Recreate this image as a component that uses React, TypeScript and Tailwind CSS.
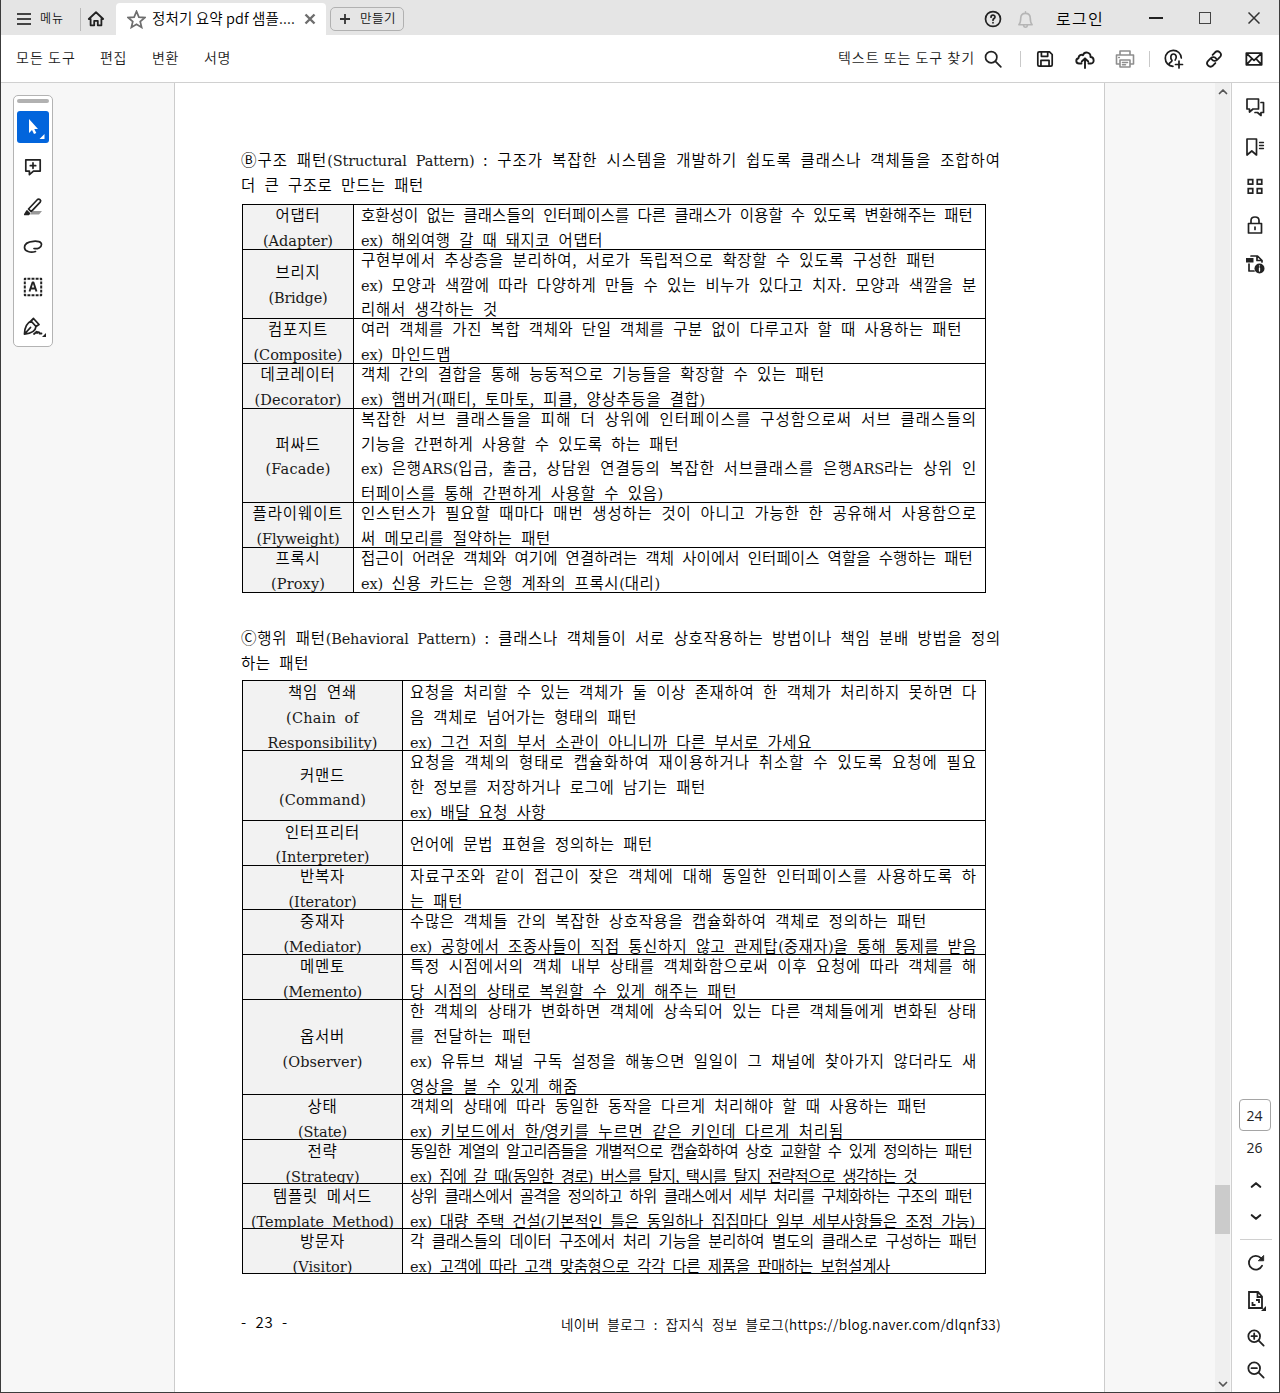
import { useLayoutEffect, useRef, useState } from 'react';
import type { ReactNode } from 'react';

function Fit({ text, w, serif = false, className = '' }: { text: string; w: number; serif?: boolean; className?: string }) {
  const ref = useRef<HTMLSpanElement>(null);
  const [spacing, setSpacing] = useState(0);
  const mixed = serif && /[가-힣]/.test(text);
  useLayoutEffect(() => {
    const count = mixed ? text.replace(/[A-Za-z()/]/g, '').length : text.length;
    if (ref.current) setSpacing((w - ref.current.getBoundingClientRect().width) / count);
  }, []);
  return (
    <span ref={ref} className={`inline-block whitespace-pre ${className}`} style={{ letterSpacing: spacing }}>
      {serif
        ? text.split(/([A-Za-z()/]+)/).map((part, i) =>
            i % 2 ? (
              <span key={i} className={`font-['DejaVu_Serif',serif] text-[14.5px] font-normal leading-none text-[#1a1a1a] ${mixed ? 'tracking-[-0.15px]' : ''}`}>{part}</span>
            ) : (
              part
            ),
          )
        : text}
    </span>
  );
}

type Line = [string, number];
type Row = { h: string; label: Line[]; body: Line[] };

const structural: Row[] = [
  { h: 'h-[45px]', label: [['어댑터', 45], ['(Adapter)', 70]], body: [['호환성이 없는 클래스들의 인터페이스를 다른 클래스가 이용할 수 있도록 변환해주는 패턴', 612], ['ex) 해외여행 갈 때 돼지코 어댑터', 242]] },
  { h: 'h-[69px]', label: [['브리지', 45], ['(Bridge)', 59]], body: [['구현부에서 추상층을 분리하여, 서로가 독립적으로 확장할 수 있도록 구성한 패턴', 575], ['ex) 모양과 색깔에 따라 다양하게 만들 수 있는 비누가 있다고 치자. 모양과 색깔을 분', 616], ['리해서 생각하는 것', 137]] },
  { h: 'h-[45px]', label: [['컴포지트', 60], ['(Composite)', 89]], body: [['여러 객체를 가진 복합 객체와 단일 객체를 구분 없이 다루고자 할 때 사용하는 패턴', 601], ['ex) 마인드맵', 90]] },
  { h: 'h-[45px]', label: [['데코레이터', 75], ['(Decorator)', 87]], body: [['객체 간의 결합을 통해 능동적으로 기능들을 확장할 수 있는 패턴', 464], ['ex) 햄버거(패티, 토마토, 피클, 양상추등을 결합)', 344]] },
  { h: 'h-[94px]', label: [['퍼싸드', 45], ['(Facade)', 65]], body: [['복잡한 서브 클래스들을 피해 더 상위에 인터페이스를 구성함으로써 서브 클래스들의', 616], ['기능을 간편하게 사용할 수 있도록 하는 패턴', 318], ['ex) 은행ARS(입금, 출금, 상담원 연결등의 복잡한 서브클래스를 은행ARS라는 상위 인', 616], ['터페이스를 통해 간편하게 사용할 수 있음)', 302]] },
  { h: 'h-[45px]', label: [['플라이웨이트', 91], ['(Flyweight)', 83]], body: [['인스턴스가 필요할 때마다 매번 생성하는 것이 아니고 가능한 한 공유해서 사용함으로', 616], ['써 메모리를 절약하는 패턴', 190]] },
  { h: 'h-[45px]', label: [['프록시', 45], ['(Proxy)', 54]], body: [['접근이 어려운 객체와 여기에 연결하려는 객체 사이에서 인터페이스 역할을 수행하는 패턴', 612], ['ex) 신용 카드는 은행 계좌의 프록시(대리)', 299]] },
];

const behavioral: Row[] = [
  { h: 'h-[70px] pt-[2px]', label: [['책임 연쇄', 69], ['(Chain of', 73], ['Responsibility)', 110]], body: [['요청을 처리할 수 있는 객체가 둘 이상 존재하여 한 객체가 처리하지 못하면 다', 567], ['음 객체로 넘어가는 형태의 패턴', 227], ['ex) 그건 저희 부서 소관이 아니니까 다른 부서로 가세요', 402]] },
  { h: 'h-[70px] pt-[2px]', label: [['커맨드', 45], ['(Command)', 87]], body: [['요청을 객체의 형태로 캡슐화하여 재이용하거나 취소할 수 있도록 요청에 필요', 567], ['한 정보를 저장하거나 로그에 남기는 패턴', 296], ['ex) 배달 요청 사항', 136]] },
  { h: 'h-[45px] pt-[1px]', label: [['인터프리터', 75], ['(Interpreter)', 94]], body: [['언어에 문법 표현을 정의하는 패턴', 243]] },
  { h: 'h-[44px] pt-[1px]', label: [['반복자', 45], ['(Iterator)', 68]], body: [['자료구조와 같이 접근이 잦은 객체에 대해 동일한 인터페이스를 사용하도록 하', 567], ['는 패턴', 53]] },
  { h: 'h-[45px] pt-[2px]', label: [['중재자', 45], ['(Mediator)', 78]], body: [['수많은 객체들 간의 복잡한 상호작용을 캡슐화하여 객체로 정의하는 패턴', 517], ['ex) 공항에서 조종사들이 직접 통신하지 않고 관제탑(중재자)을 통해 통제를 받음', 567]] },
  { h: 'h-[45px] pt-[2px]', label: [['메멘토', 45], ['(Memento)', 79]], body: [['특정 시점에서의 객체 내부 상태를 객체화함으로써 이후 요청에 따라 객체를 해', 567], ['당 시점의 상태로 복원할 수 있게 해주는 패턴', 327]] },
  { h: 'h-[95px] pt-[2px]', label: [['옵서버', 45], ['(Observer)', 80]], body: [['한 객체의 상태가 변화하면 객체에 상속되어 있는 다른 객체들에게 변화된 상태', 567], ['를 전달하는 패턴', 122], ['ex) 유튜브 채널 구독 설정을 해놓으면 일일이 그 채널에 찾아가지 않더라도 새', 567], ['영상을 볼 수 있게 해줌', 168]] },
  { h: 'h-[45px] pt-[2px]', label: [['상태', 30], ['(State)', 49]], body: [['객체의 상태에 따라 동일한 동작을 다르게 처리해야 할 때 사용하는 패턴', 517], ['ex) 키보드에서 한/영키를 누르면 같은 키인데 다르게 처리됨', 434]] },
  { h: 'h-[44px] pt-[3px]', label: [['전략', 30], ['(Strategy)', 74]], body: [['동일한 계열의 알고리즘들을 개별적으로 캡슐화하여 상호 교환할 수 있게 정의하는 패턴', 562], ['ex) 집에 갈 때(동일한 경로) 버스를 탈지, 택시를 탈지 전략적으로 생각하는 것', 507]] },
  { h: 'h-[45px] pt-[4px]', label: [['템플릿 메서드', 99], ['(Template Method)', 143]], body: [['상위 클래스에서 골격을 정의하고 하위 클래스에서 세부 처리를 구체화하는 구조의 패턴', 562], ['ex) 대량 주택 건설(기본적인 틀은 동일하나 집집마다 일부 세부사항들은 조정 가능)', 565]] },
  { h: 'h-[45px] pt-[4px]', label: [['방문자', 45], ['(Visitor)', 60]], body: [['각 클래스들의 데이터 구조에서 처리 기능을 분리하여 별도의 클래스로 구성하는 패턴', 567], ['ex) 고객에 따라 고객 맞춤형으로 각각 다른 제품을 판매하는 보험설계사', 480]] },
];

const lineClass = 'h-[24.8px] shrink-0 leading-[24.8px]';

function PatternTable({ rows, label }: { rows: Row[]; label: string }) {
  return (
    <div className="ml-px w-[744px] border-x border-t border-black">
      {rows.map((r) => {
        const [height, pad = ''] = r.h.split(' ');
        return (
          <div key={r.label[0][0]} className={`flex overflow-hidden border-b border-black ${height}`}>
            <div className={`flex shrink-0 flex-col items-center justify-center border-r border-black bg-[#f2f2f2] ${label} ${pad}`}>
              {r.label.map(([t, w]) => (
                <div key={t} className={lineClass}><Fit serif text={t} w={w} /></div>
              ))}
            </div>
            <div className={`flex flex-col justify-center pl-[7px] ${pad}`}>
              {r.body.map(([t, w]) => (
                <div key={t} className={lineClass}><Fit serif text={t} w={w} /></div>
              ))}
            </div>
          </div>
        );
      })}
    </div>
  );
}

function Icon({ children, size = 20, className = '', sw = 1.7 }: { children: ReactNode; size?: number; className?: string; sw?: number }) {
  return (
    <svg width={size} height={size} viewBox="0 0 20 20" fill="none" stroke="currentColor" strokeWidth={sw} strokeLinecap="round" strokeLinejoin="round" className={`shrink-0 ${className}`}>
      {children}
    </svg>
  );
}

function TitleBar() {
  return (
    <header className="flex h-[35px] shrink-0 bg-[#e5e5e5]">
      <div className="flex w-[115px] items-center pl-[15px] pt-[3px]">
        <svg width="16" height="14" viewBox="0 0 16 14" stroke="#444" strokeWidth="1.8"><path d="M1 2h14M1 7h14M1 12h14" /></svg>
        <Fit text="메뉴" w={24} className="mb-[2px] ml-[8px] text-[12px] leading-none" />
        <div className="ml-[16px] h-[23px] w-px bg-[#b9b9b9]" />
        <Icon size={18} className="ml-[6px] text-[#222]" sw={2}><path d="M2 10 10 2.5l8 7.5h-2v7h-4v-5H8v5H4v-7z" /></Icon>
      </div>
      <div className="mt-[3px] flex h-[32px] w-[210px] items-center rounded-t-[4px] bg-white pl-[11px]">
        <Icon size={19} className="text-[#6e6e6e]" sw={1.8}><path d="m10 1.500 2.500 6 6.200.5-4.800 4.100 1.500 6.200L10 15l-5.400 3.300 1.500-6.200L1.300 8l6.200-.5z" strokeLinejoin="miter" /></Icon>
        <Fit text="정처기 요약 pdf 샘플...." w={143} className="mb-[2px] ml-[6px] text-[14.5px] leading-none text-black" />
        <svg width="12" height="12" viewBox="0 0 12 12" stroke="#6e6e6e" strokeWidth="2.4" className="ml-[9px]"><path d="m1.500 1.500 9 9m0-9-9 9" /></svg>
      </div>
      <div className="ml-[4px] mt-[7px] flex h-[24px] w-[74px] items-center rounded-[5px] border border-[#b1b1b1] pl-[8px]">
        <svg width="12" height="12" viewBox="0 0 12 12" stroke="#333" strokeWidth="1.8"><path d="M1 6h10M6 1v10" /></svg>
        <Fit text="만들기" w={36} className="mb-[1px] ml-[9px] text-[12.5px] leading-none" />
      </div>
      <div className="ml-auto flex items-center">
        <Icon size={18} className="mt-[3px] text-[#222]" sw={1.9}><circle cx="10" cy="10" r="8.300" /><path d="M7.800 8c0-3 4.400-2.800 4.400-.3 0 1.800-2.200 1.700-2.200 3.600M10 14v.2" /></Icon>
        <Icon size={19} className="ml-[14px] mt-[3px] text-[#b5b5b5]"><path d="M3 15.500c2-2 2-4 2-7 0-3.500 1.700-5 5-5s5 1.500 5 5c0 3 0 5 2 7zM8 16.500c.5 2.300 3.500 2.300 4 0M10 2v1" /></Icon>
        <Fit text="로그인" w={48} className="ml-[21px] text-[16px] leading-none text-black" />
        <div className="ml-[45px] h-[2px] w-[14px] bg-[#222]" />
        <div className="ml-[36px] h-[12px] w-[12px] border-[1.5px] border-[#444]" />
        <svg width="12" height="12" viewBox="0 0 12 12" stroke="#333" strokeWidth="1.500" className="ml-[37px] mr-[19px]"><path d="m.5.5 11 11m0-11-11 11" /></svg>
      </div>
    </header>
  );
}

function Toolbar() {
  return (
    <div className="flex h-[48px] shrink-0 items-center border-b border-[#d0d0d0] bg-white pl-[15px] pr-[16px] text-[14px] text-[#1c1c1c]">
      <div className="mb-[2px] flex">
        <Fit text="모든 도구" w={60} />
        <Fit text="편집" w={27} className="ml-[24px]" />
        <Fit text="변환" w={27} className="ml-[25px]" />
        <Fit text="서명" w={27} className="ml-[25px]" />
      </div>
      <div className="ml-auto flex items-center">
        <Fit text="텍스트 또는 도구 찾기" w={137} className="mb-[2px]" />
        <Icon size={18} className="ml-[9px] text-[#222]" sw={1.9}><circle cx="8" cy="8" r="6.300" /><path d="m12.700 12.700 6 6" /></Icon>
        <div className="ml-[18px] h-[16px] w-px bg-[#c9c9c9]" />
        <Icon size={18} className="ml-[15px]" sw={1.9}><path d="M2 3.500Q2 2 3.500 2H15l3 3v11.500q0 1.500-1.500 1.500h-13Q2 18 2 16.500zM6 2v5h7V2M5.500 18v-6.500h9V18" /></Icon>
        <Icon size={20} className="ml-[21px]" sw={1.9}><path d="M6.500 14.500H4C.7 14.500.3 10 3.500 9.300 3.500 6.200 6.500 5 8 6.200 9.500 2 15.800 3 15.500 8c4 0 4.200 6.500.5 6.500h-2.500M10 19v-9M6.800 12.500 10 9.300l3.200 3.200" /></Icon>
        <Icon size={20} className="ml-[20px] text-[#8e8e8e]" sw={1.600}><path d="M5 6V2h10v4M5 15H1.500V6h17v9H15M5 11h10v7H5zM7.500 13.500h5M7.500 15.700h3M3.800 8.500h.5" /></Icon>
        <div className="ml-[14px] h-[16px] w-px bg-[#c9c9c9]" />
        <Icon size={20} className="ml-[14px]" sw={1.700}><path d="M9 17.300A8 8 0 1 1 17.300 9M5 15.500c0-2.500 3-2 3-4C6 9 6.500 5 9.500 5s3.500 4 1.700 6M15 12v7M11.500 15.500h7" /></Icon>
        <Icon size={18} className="ml-[21px]" sw={2}><path d="m8.500 5.500 2.500-2.700c3.800-3.500 9 1.500 5.500 5.200l-3 3c-2 1.700-4.500 1.300-5.800-.5M11.500 14.500 9 17.200c-3.800 3.500-9-1.500-5.500-5.200l3-3c2-1.700 4.500-1.300 5.800.5" /></Icon>
        <Icon size={18} className="ml-[22px]" sw={2}><path d="M1.500 3.500h17v13h-17zM2 4l8 7.500L18 4M2 16l5.500-6M18 16l-5.500-6" /></Icon>
      </div>
    </div>
  );
}

function ToolPalette() {
  return (
    <div className="ml-[12px] mt-[12px] flex h-[252px] w-[40px] flex-col items-center rounded-[5px] border border-[#b3b3b3] bg-white pt-[3px] text-[#222]">
      <div className="h-[4px] w-[32px] rounded-full bg-[#b1b1b1]" />
      <div className="mt-[8px] flex h-[32px] w-[32px] shrink-0 items-center justify-center rounded-[3px] bg-[#0265dc]">
        <svg width="32" height="32" viewBox="0 0 32 32" fill="white"><path d="M12 8v14l3-3 2 4 2.300-1-2-4H21zM27.500 23v5h-5z" /></svg>
      </div>
      <Icon size={18} className="mt-[15px]" sw={1.9}><path d="M2 2h16v12.500h-7.500L6 18.500v-4H2zM10 5.500v6M7 8.500h6" /></Icon>
      <Icon size={20} className="mt-[21px]"><path d="M7 17.500h9l3-3.500H10z" fill="#999" stroke="none" /><path d="m5.500 12 9-9.500q1.200-1 2.500.2t.2 2.500l-9 9.500zM5.500 12l2.700 2.700" /><path d="m4 14 2.500 2.500-1 1H1.800z" fill="currentColor" /></Icon>
      <Icon size={20} className="mt-[20px]"><path d="M11 11.500c3.500.8 7.500-1 7.500-4C18.500 4.500 14 4 10.500 4.300 5 4.700 1.500 7 1.500 10.500c0 4 6 5.500 11 4" /></Icon>
      <Icon size={20} className="mt-[20px]"><path d="M1.800 1.800h16.400v16.400H1.800z" strokeWidth="2" strokeDasharray="2.900 1.200" strokeDashoffset="1.450" strokeLinecap="butt" /><path d="m6.500 14.500 3-9h1l3 9M7.700 11.500h4.600" strokeWidth="1.900" strokeLinecap="butt" /></Icon>
      <svg width="28" height="24" viewBox="0 0 28 24" fill="none" stroke="currentColor" strokeWidth="1.800" strokeLinecap="round" strokeLinejoin="round" className="ml-[2px] mt-[18px] shrink-0"><path d="M4.500 19c0-6 1.500-10.500 6.500-13l5 5.500c-.5 4.500-4 7-11.500 7.500zM11 6l2.500-2.500 5.500 6-3 2M4.500 19l6-6.500M14 19c2.500-2 3.500-3.500 3-1 1.500-1.200 2.500-1 2.500.5h2" /><path d="M26 18v4h-4z" fill="currentColor" stroke="none" /></svg>
    </div>
  );
}

function SideRail() {
  return (
    <aside className="flex w-[48px] shrink-0 flex-col items-center border-l border-[#d0d0d0] bg-white text-[#222]">
      <Icon size={20} className="mr-[2px] mt-[14px]"><path d="M2 2h11.500v10H8l-3.500 3v-3H2zM16 5.500h2.500v10H16v3l-3.500-3H10" /></Icon>
      <Icon size={20} className="mr-[2px] mt-[20px]"><path d="M2 2h9.500v16l-4.700-4L2 18z" /><path d="M14.500 5.500h4M14.500 8.500h4M14.500 11.500h4" strokeWidth="1.300" /></Icon>
      <Icon size={18} className="mr-[2px] mt-[20px]" sw={1.900}><path d="M2.500 3h5v5h-5zM12.500 3h5v5h-5zM2.500 13h5v5h-5zM12.500 13h5v5h-5z" strokeLinejoin="miter" /></Icon>
      <Icon size={20} className="mr-[2px] mt-[20px]"><path d="M3.500 8.500h13V18h-13zM6 8.500V5.500q0-3.500 4-3.500t4 3.500v3M10 12v2.500" /></Icon>
      <Icon size={20} className="mr-[2px] mt-[19px]"><path d="M6 2h6.500l4.500 4.500V8M4 10v7h5M12 2v4.500h5" /><path d="M1 4h7.500v4.500H1z" fill="currentColor" stroke="none" /><circle cx="14.500" cy="14.500" r="5" fill="currentColor" stroke="none" /><path d="M14.500 14v3M14.500 11.800v.1" stroke="white" strokeWidth="1.300" /></Icon>
      <div className="mr-[2px] mt-auto flex h-[32px] w-[32px] shrink-0 items-center justify-center rounded-[4px] border border-[#a5a5a5] font-['Open_Sans',sans-serif] text-[14px] font-normal">24</div>
      <div className="mr-[2px] mt-[7px] font-['Open_Sans',sans-serif] text-[14px] font-normal leading-[20px]">26</div>
      <Icon size={12} className="mt-[21px]" sw={3.600}><path d="m3 13 7-6 7 6" /></Icon>
      <Icon size={12} className="mt-[20px]" sw={3.600}><path d="m3 7 7 6 7-6" /></Icon>
      <div className="mt-[16px] h-px w-[32px] bg-[#d0d0d0]" />
      <Icon size={18} className="mt-[14px]" sw={2}><path d="M16.800 13A7.700 7.700 0 1 1 15.500 4.500" /><path d="M18.500 2v5.500H13z" fill="currentColor" strokeWidth="1" /></Icon>
      <svg width="22" height="22" viewBox="0 0 22 22" fill="none" stroke="currentColor" strokeWidth="1.800" className="ml-[2px] mt-[18px] shrink-0"><path d="M3 2h9l4 4.500V18H3zM11.500 2v5H16M6.500 12v3h3M10 10h3v3" /><path d="M20 16v5h-5z" fill="currentColor" stroke="none" /></svg>
      <Icon size={18} className="ml-[1px] mt-[17px]" sw={2}><circle cx="8" cy="8" r="6.500" /><path d="m13 13 5.500 5.500M8 5v6M5 8h6" /></Icon>
      <Icon size={18} className="mb-[13px] ml-[1px] mt-[14px]" sw={2}><circle cx="8" cy="8" r="6.500" /><path d="m13 13 5.500 5.500M5 8h6" /></Icon>
    </aside>
  );
}

export default function App() {
  return (
    <div className="flex h-[1393px] w-[1280px] flex-col overflow-hidden border-x border-b border-[#3c3c3c] bg-[#f7f7f7] font-['Noto_Sans_CJK_KR',sans-serif] font-[350] text-[#111]">
      <TitleBar />
      <Toolbar />
      <div className="flex min-h-0 flex-1">
        <div className="w-[173px] shrink-0"><ToolPalette /></div>
        <main className="flex w-[931px] shrink-0 flex-col border-x border-[#cccccc] bg-white pl-[66px] pt-[64px] text-[15.500px] text-black [word-spacing:4.500px]">
          <div className={lineClass}><Fit serif text="Ⓑ구조 패턴(Structural Pattern) : 구조가 복잡한 시스템을 개발하기 쉽도록 클래스나 객체들을 조합하여" w={760} /></div>
          <div className={`mb-[7.400px] ${lineClass}`}><Fit serif text="더 큰 구조로 만드는 패턴" w={183} /></div>
          <PatternTable rows={structural} label="w-[111px]" />
          <div className={`mt-[32px] ${lineClass}`}><Fit serif text="Ⓒ행위 패턴(Behavioral Pattern) : 클래스나 객체들이 서로 상호작용하는 방법이나 책임 분배 방법을 정의" w={760} /></div>
          <div className={`mb-[5.400px] ${lineClass}`}><Fit serif text="하는 패턴" w={68} /></div>
          <PatternTable rows={behavioral} label="w-[160px]" />
          <div className="mt-[36px] flex w-[760px] items-start justify-between">
            <Fit text="- 23 -" w={47} className="text-[15px] leading-[24px]" />
            <Fit text="네이버 블로그 : 잡지식 정보 블로그(https://blog.naver.com/dlqnf33)" w={440} className="mt-[2px] text-[13.500px] leading-[24px]" />
          </div>
        </main>
        <div className="flex-1" />
        <div className="mr-px flex w-[15px] shrink-0 flex-col items-center bg-[#efefef]">
          <Icon size={10} className="mt-[4px] text-[#555]" sw={3.500}><path d="m3 13 7-7 7 7" /></Icon>
          <div className="mt-auto h-[49px] w-[15px] bg-[#cbcbcb]" />
          <Icon size={10} className="mb-[3px] mt-[145px] text-[#555]" sw={3.500}><path d="m3 7 7 7 7-7" /></Icon>
        </div>
        <SideRail />
      </div>
    </div>
  );
}
